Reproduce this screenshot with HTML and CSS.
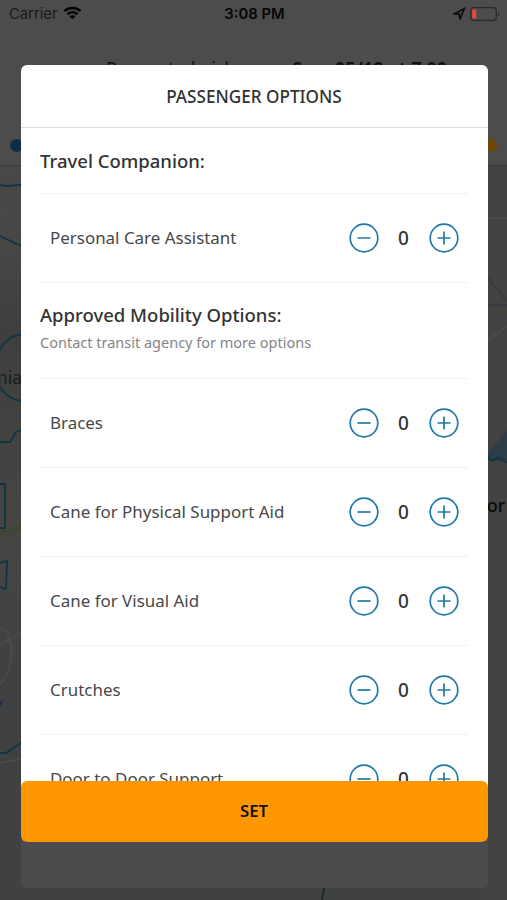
FILE: index.html
```html
<!DOCTYPE html>
<html lang="en">
<head>
<meta charset="utf-8">
<title>Passenger Options</title>
<link rel="stylesheet" href="styles.css">
</head>
<body>
<svg width="0" height="0" class="defs">
  <symbol id="minus" viewBox="0 0 30 30"><circle cx="15" cy="15" r="13.8"/><path d="M8.5 15h13"/></symbol>
  <symbol id="plus" viewBox="0 0 30 30"><circle cx="15" cy="15" r="13.8"/><path d="M8.5 15h13M15 8.5v13"/></symbol>
</svg>
<div class="screen">
  <svg class="map" viewBox="0 0 507 735" width="507" height="735">
    <defs>
      <linearGradient id="shade" x1="0" y1="0" x2="0" y2="1">
        <stop offset="0" stop-color="#484846"/><stop offset=".12" stop-color="#464644"/>
        <stop offset=".22" stop-color="#3f3f3f"/><stop offset=".5" stop-color="#454543"/>
        <stop offset=".7" stop-color="#3f4142"/><stop offset="1" stop-color="#404242"/>
      </linearGradient>
    </defs>
    <rect width="507" height="735" fill="url(#shade)"/>
    <rect x="480" width="27" height="735" fill="#434342"/>
    <path class="green" d="M0 370L21 362"/>
    <path class="road" d="M0 45l21 12M0 462l8 6 4 16-3 22-9 14M0 480l21-12M0 598l21-4M487 53h20M487 176l20-15"/>
    <path class="faint" d="M487 112l20 24M487 140h20"/>
    <path class="water" d="M487 288l20-22v30h-20z"/>
    <path class="line" d="M0 20l6 1 15-1M0 71l21 10M0 185c4-9 12-15 21-15M0 222c4 7 12 13 21 14M0 277h10l6-10 5-2M0 319h5v44H0M0 398l7-2-1 28-6-2M0 588h6l15-10M487 292l6 4 5-4 9 6"/>
    <path class="contour" d="M326 713l-2 10-2 12"/>
  </svg>
  <header class="trip">
    <div class="status">
      <span class="carrier">Carrier
        <svg viewBox="0 0 20 14" width="19" height="14"><path class="wifi" d="M1.5 5.1C6.2.7 13.8.7 18.5 5.1M4.8 8.3c3-2.8 7.4-2.8 10.4 0"/><path d="M6.9 10.6c1.8-1.5 4.4-1.5 6.2 0L10 13.6z"/></svg>
      </span>
      <span class="clock">3:08 PM</span>
      <span class="power">
        <svg viewBox="0 0 13 13" width="13" height="13"><path class="arrow" d="M1.5 6.7L11.4 1.6 7 11.6 6.1 7z"/></svg>
        <svg viewBox="0 0 30 14" width="30" height="14"><rect class="cell" x=".8" y=".7" width="25.5" height="12.6" rx="3"/><rect x="2.2" y="2.4" width="4" height="9.2" rx="1" fill="#ef473f"/><path d="M27.8 5v4q1.4-.5 1.4-2T27.8 5z" fill="#292929"/></svg>
      </span>
    </div>
    <p class="pickup"><span>Requested pickup:</span><b>Sun, 05/19 at 7:00</b></p>
    <div class="stops"><i class="start"></i><i class="end"></i></div>
  </header>
  <span class="place west">nia</span>
  <span class="place east">or</span>
  <span class="place river">y</span>
  <section class="sheet"><span>Apply</span></section>

  <main class="modal">
    <h1>PASSENGER OPTIONS</h1>
    <div class="list">
      <div class="group"><h2>Travel Companion:</h2></div>
      <div class="row"><span class="name">Personal Care Assistant</span><svg><use href="#minus"/></svg><output>0</output><svg><use href="#plus"/></svg></div>
      <div class="group tall"><h2>Approved Mobility Options:</h2><p>Contact transit agency for more options</p></div>
      <div class="row"><span class="name">Braces</span><svg><use href="#minus"/></svg><output>0</output><svg><use href="#plus"/></svg></div>
      <div class="row"><span class="name">Cane for Physical Support Aid</span><svg><use href="#minus"/></svg><output>0</output><svg><use href="#plus"/></svg></div>
      <div class="row"><span class="name">Cane for Visual Aid</span><svg><use href="#minus"/></svg><output>0</output><svg><use href="#plus"/></svg></div>
      <div class="row"><span class="name">Crutches</span><svg><use href="#minus"/></svg><output>0</output><svg><use href="#plus"/></svg></div>
      <div class="row"><span class="name">Door to Door Support</span><svg><use href="#minus"/></svg><output>0</output><svg><use href="#plus"/></svg></div>
    </div>
    <button class="set">SET</button>
  </main>
</div>
</body>
</html>
```
FILE: styles.css
```css
* { box-sizing: border-box; }
body { margin: 0; background: #404141; font-family: "Noto Sans", "Open Sans", sans-serif; color: #333; }
h1, h2, p { margin: 0; }
.defs { position: absolute; }
.screen { position: relative; width: 507px; height: 900px; overflow: hidden; }

.map { position: absolute; left: 0; top: 165px; fill: none; }
.line { stroke: #0e3546; stroke-width: 1.8; }
.road { stroke: #4b4b4a; stroke-width: 2; }
.faint { stroke: #393b40; stroke-width: 2; }
.green { stroke: #3d4734; stroke-width: 7; }
.water { fill: #2c3d47; }
.contour { stroke: #24282b; stroke-width: 2; }

.trip { position: relative; height: 166px; background: #4c4c4c; border-bottom: 1px solid #393c3d; }
.status { display: grid; grid-template-columns: 1fr auto 1fr; align-items: center; height: 28px; padding: 0 7px 0 9px; font: 14.8px/28px Inter, sans-serif; color: #191919; }
.carrier { display: flex; align-items: center; gap: 5px; }
.carrier svg { position: relative; top: -1px; fill: #050505; }
.wifi { fill: none; stroke: #050505; stroke-width: 2.6; }
.clock { font-weight: 600; color: #050505; }
.power { display: flex; align-items: center; justify-content: flex-end; gap: 4px; padding-bottom: 1px; }
.arrow { fill: none; stroke: #0a0a0a; stroke-width: 1.6; }
.cell { fill: none; stroke: #292929; stroke-width: 1.2; }
.pickup { display: flex; justify-content: space-between; width: 341px; margin: 29px 0 0 106px; font-size: 17.9px; line-height: 22px; color: #111; white-space: nowrap; }
.stops { display: flex; justify-content: space-between; margin: 60px 10px 0; }
.stops i { width: 13px; height: 13px; border-radius: 50%; }
.start { background: #0b2f48; }
.end { background: #6e4708; }

.place { position: absolute; font-size: 17.5px; line-height: 22px; color: #1b1b1b; }
.west { left: -3px; top: 366px; }
.east { left: 487px; top: 494px; font-weight: 500; color: #080808; }
.river { left: -4px; top: 692px; font-size: 14px; font-style: italic; color: #211a5c; }

.sheet { position: absolute; left: 21px; top: 770px; width: 467px; height: 118px; padding-top: 50px; border-radius: 6px; background: #4b4b4b; text-align: center; font-size: 17px; line-height: 24px; color: #171d20; }

.modal { position: absolute; left: 20.5px; top: 64.5px; width: 467px; height: 777px; display: flex; flex-direction: column; border-radius: 6px; background: linear-gradient(#fff 750px, transparent 750px); overflow: hidden; }
h1 { flex: none; height: 63.5px; border-bottom: 1.5px solid #dcdcdc; text-align: center; font-size: 17.15px; font-weight: 500; line-height: 63px; color: #333; }
.list { flex: 1; min-height: 0; padding: 0 19.5px; overflow: hidden; }
.group { height: 65.5px; padding-top: 19.5px; border-bottom: 1.5px solid #f2f2f2; }
.tall { height: 96px; padding-top: 19px; }
h2 { font-size: 18.5px; line-height: 26px; font-weight: 500; color: #333; }
.group p { margin-top: 3.5px; font-size: 14.5px; line-height: 22px; color: #858585; }
.row { display: flex; align-items: center; height: 89.15px; padding: 0 9.5px 0 10px; border-bottom: 1.5px solid #f2f2f2; }
.name { flex: 1; padding-bottom: 1px; font-size: 16.95px; color: #484848; }
.row svg { width: 30px; height: 30px; fill: none; stroke: #2079a6; stroke-width: 1.7; }
output { width: 50px; text-align: center; font-size: 19px; font-weight: 500; color: #333; }
.set { flex: none; height: 61px; padding: 0 0 2px; border: 0; border-radius: 6px; background: #ff9800; font: 600 16.8px "Noto Sans", sans-serif; color: #111; }
```
